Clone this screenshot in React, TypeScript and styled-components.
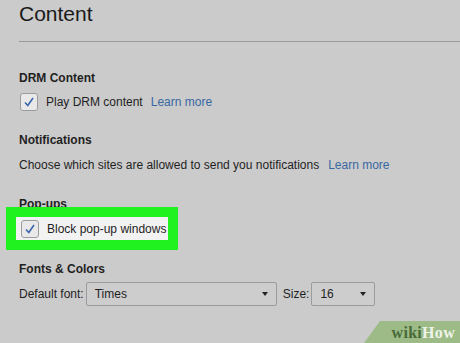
import styled, { createGlobalStyle } from "styled-components";

const GlobalStyle = createGlobalStyle`
  html, body {
    margin: 0;
    padding: 0;
    background: #cbcbcb;
  }
  body {
    font-family: "Liberation Sans", Arial, sans-serif;
    color: #1f1f1f;
    overflow: hidden;
  }
`;

const Page = styled.div`
  position: relative;
  width: 460px;
  height: 343px;
  overflow: hidden;
  background: #cbcbcb;
`;

const Header = styled.header`
  height: 41px;
  margin-left: 19px;
  border-bottom: 1px solid #9a9a9a;
`;

const Title = styled.h1`
  margin: 0;
  padding-top: 2px;
  font-size: 21px;
  font-weight: 400;
  line-height: 24px;
  color: #1a1a1a;
`;

const Body = styled.div`
  padding-left: 19px;
  display: flex;
  flex-direction: column;
`;

const SectionTitle = styled.div<{ $gap: number }>`
  margin-top: ${({ $gap }) => $gap}px;
  font-size: 12px;
  font-weight: 700;
  line-height: 16px;
  height: 16px;
`;

const Row = styled.div<{ $gap: number }>`
  margin-top: ${({ $gap }) => $gap}px;
  display: flex;
  align-items: center;
  font-size: 12px;
  line-height: 16px;
`;

const Highlight = styled.div`
  align-self: flex-start;
  margin-top: -5px;
  margin-left: -13px;
  border: 10px solid #1ff21f;
  background: #f2f2f2;
  padding: 3px 2px 2px 4px;
  display: flex;
  align-items: center;
  font-size: 12px;
  line-height: 16px;
`;

const Box = styled.span`
  box-sizing: border-box;
  width: 18px;
  height: 18px;
  margin-left: 1px;
  margin-right: 8px;
  border: 1px solid #9c9c9c;
  border-radius: 3px;
  background: #e9e9e9;
  display: flex;
  align-items: center;
  justify-content: center;
`;

const Link = styled.span<{ $gap: number }>`
  margin-left: ${({ $gap }) => $gap}px;
  color: #3868a3;
`;

const Select = styled.div<{ $w: number }>`
  box-sizing: border-box;
  width: ${({ $w }) => $w}px;
  height: 24px;
  margin-left: 2px;
  padding: 0 8px;
  border: 1px solid #9b9b9b;
  border-radius: 2px;
  background: #cdcdcd;
  display: flex;
  align-items: center;
  justify-content: space-between;
  font-size: 12px;
`;

const Arrow = styled.span`
  width: 0;
  height: 0;
  border-left: 3.5px solid transparent;
  border-right: 3.5px solid transparent;
  border-top: 4px solid #222;
`;

const SizeLabel = styled.span`
  margin-left: 6px;
`;

const Watermark = styled.div`
  position: absolute;
  right: 0;
  bottom: 0;
  width: 96px;
  height: 22px;
  background: #9cbb86;
  clip-path: polygon(16px 0, 100% 0, 100% 100%, 0 100%);
  display: flex;
  align-items: center;
  justify-content: flex-end;
  padding-right: 5px;
  padding-top: 1px;
  box-sizing: border-box;
  font-family: "Liberation Serif", "Times New Roman", serif;
  font-weight: 700;
  font-size: 16px;
  letter-spacing: 0.3px;
`;

const Wiki = styled.span`
  color: #4a6a38;
`;

const How = styled.span`
  color: #eef3e8;
`;

function Check() {
  return (
    <Box>
      <svg width="12" height="12" viewBox="0 0 12 12">
        <path d="M2 6.5 L4.8 9.5 L10 2" fill="none" stroke="#3a66aa" strokeWidth="1.6" />
      </svg>
    </Box>
  );
}

function App() {
  return (
    <Page>
      <GlobalStyle />
      <Header>
        <Title>Content</Title>
      </Header>
      <Body>
        <SectionTitle $gap={28}>DRM Content</SectionTitle>
        <Row $gap={7}>
          <Check />
          <span>Play DRM content</span>
          <Link $gap={8}>Learn more</Link>
        </Row>
        <SectionTitle $gap={21}>Notifications</SectionTitle>
        <Row $gap={9}>
          <span>Choose which sites are allowed to send you notifications</span>
          <Link $gap={9}>Learn more</Link>
        </Row>
        <SectionTitle $gap={23}>Pop-ups</SectionTitle>
        <Highlight>
          <Check />
          <span>Block pop-up windows</span>
        </Highlight>
        <SectionTitle $gap={11}>Fonts &amp; Colors</SectionTitle>
        <Row $gap={5}>
          <span>Default font:</span>
          <Select $w={191}>
            <span>Times</span>
            <Arrow />
          </Select>
          <SizeLabel>Size:</SizeLabel>
          <Select $w={64}>
            <span>16</span>
            <Arrow />
          </Select>
        </Row>
      </Body>
      <Watermark>
        <Wiki>wiki</Wiki>
        <How>How</How>
      </Watermark>
    </Page>
  );
}

export default App;
